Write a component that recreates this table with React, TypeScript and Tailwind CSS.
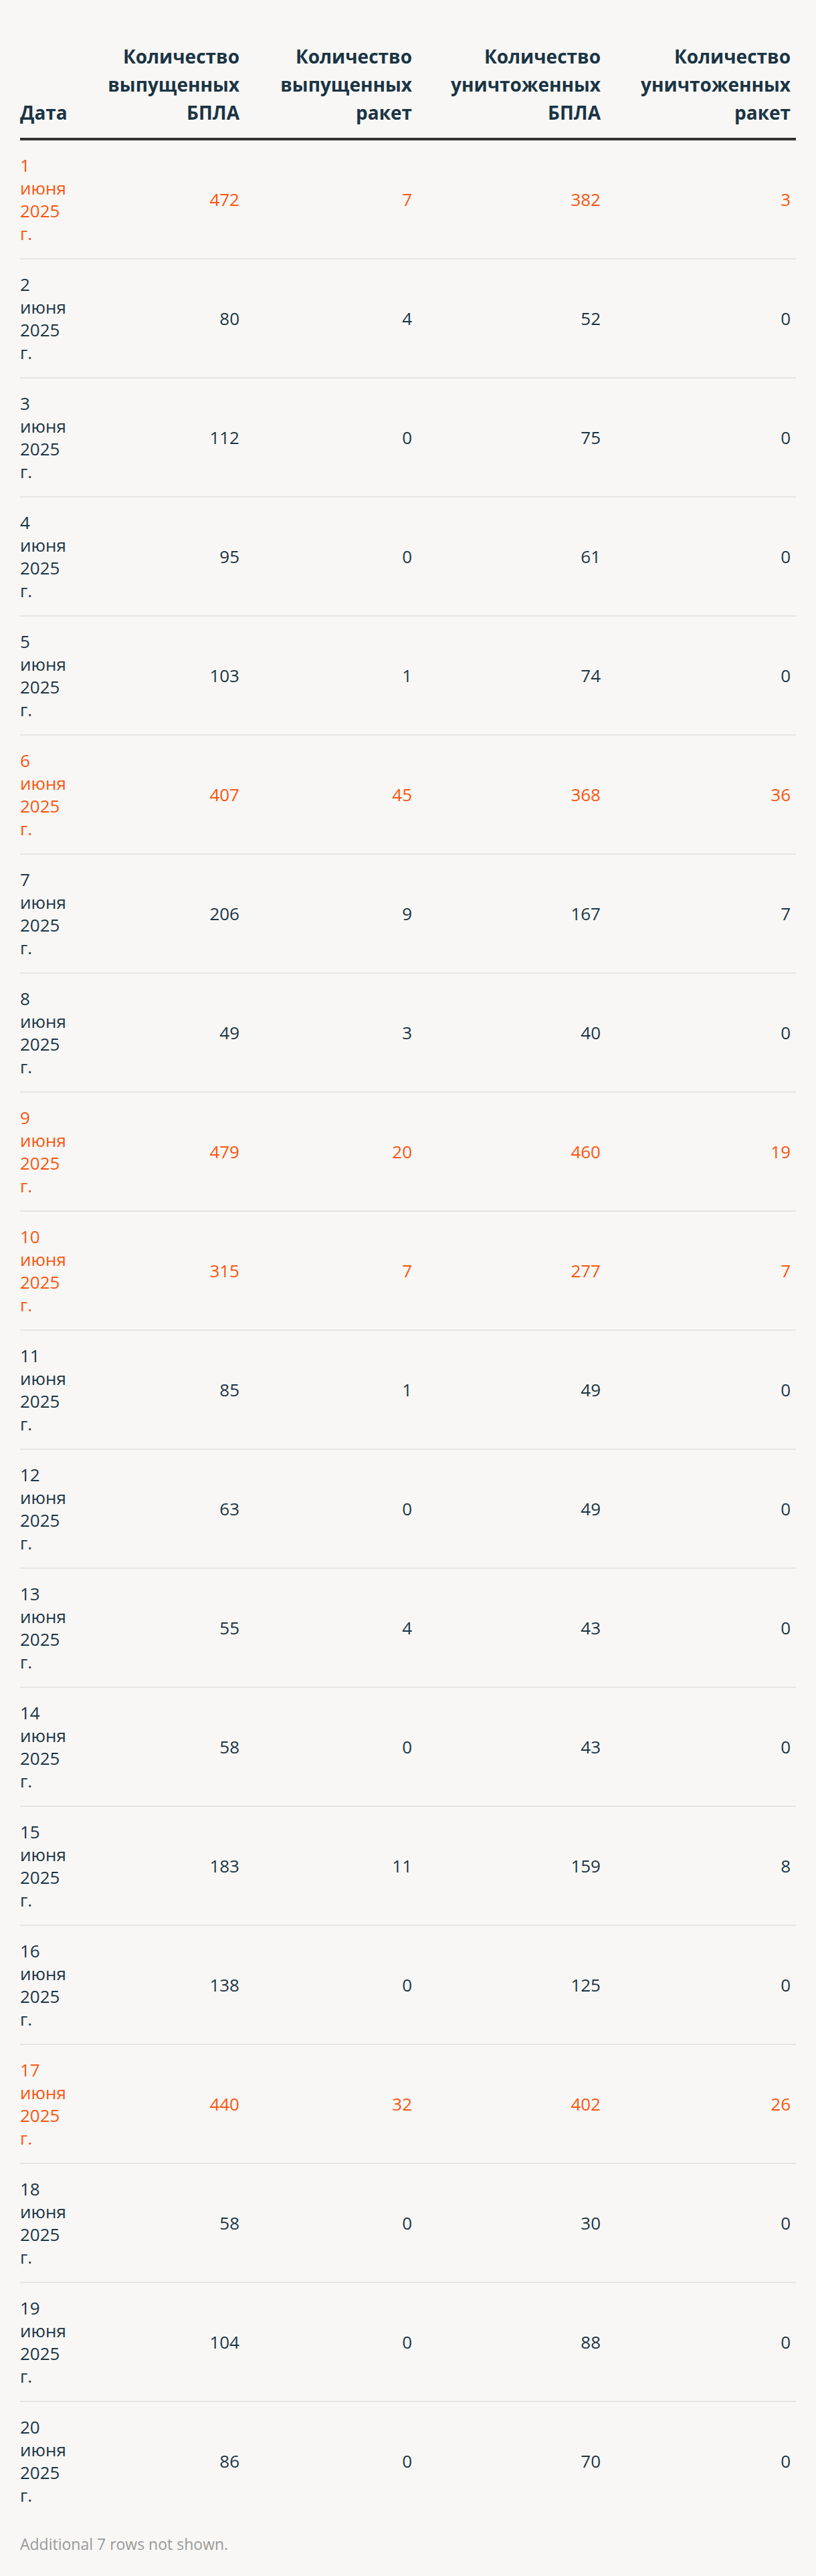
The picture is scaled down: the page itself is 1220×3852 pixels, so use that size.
import React from "react";

type Row = { d: number; a: number; b: number; c: number; e: number; hl?: boolean };

const rows: Row[] = [
  { d: 1, a: 472, b: 7, c: 382, e: 3, hl: true },
  { d: 2, a: 80, b: 4, c: 52, e: 0 },
  { d: 3, a: 112, b: 0, c: 75, e: 0 },
  { d: 4, a: 95, b: 0, c: 61, e: 0 },
  { d: 5, a: 103, b: 1, c: 74, e: 0 },
  { d: 6, a: 407, b: 45, c: 368, e: 36, hl: true },
  { d: 7, a: 206, b: 9, c: 167, e: 7 },
  { d: 8, a: 49, b: 3, c: 40, e: 0 },
  { d: 9, a: 479, b: 20, c: 460, e: 19, hl: true },
  { d: 10, a: 315, b: 7, c: 277, e: 7, hl: true },
  { d: 11, a: 85, b: 1, c: 49, e: 0 },
  { d: 12, a: 63, b: 0, c: 49, e: 0 },
  { d: 13, a: 55, b: 4, c: 43, e: 0 },
  { d: 14, a: 58, b: 0, c: 43, e: 0 },
  { d: 15, a: 183, b: 11, c: 159, e: 8 },
  { d: 16, a: 138, b: 0, c: 125, e: 0 },
  { d: 17, a: 440, b: 32, c: 402, e: 26, hl: true },
  { d: 18, a: 58, b: 0, c: 30, e: 0 },
  { d: 19, a: 104, b: 0, c: 88, e: 0 },
  { d: 20, a: 86, b: 0, c: 70, e: 0 },
];

const cols = "grid grid-cols-[80px_256px_258px_282px_284px]";

export default function App() {
  return (
    <div
      className="min-h-[3852px] bg-[#f8f7f5] px-[30px] pt-[47px]"
      style={{ fontFamily: '"Open Sans", "Noto Sans", sans-serif' }}
    >
      <div className="w-[1160px]">
        <div className={`${cols} border-b-4 border-[#333333] text-[28px] font-bold leading-[42px] text-[#1a3444]`}>
          <div className="flex items-end pb-[17px] pt-4 pr-2">Дата</div>
          <div className="flex items-end justify-end pb-[17px] pt-4 pr-2 text-right">
            Количество выпущенных БПЛА
          </div>
          <div className="flex items-end justify-end pb-[17px] pt-4 pr-2 text-right">
            Количество выпущенных ракет
          </div>
          <div className="flex items-end justify-end pb-[17px] pt-4 pr-2 text-right">
            Количество уничтоженных БПЛА
          </div>
          <div className="flex items-end justify-end pb-[17px] pt-4 pr-2 text-right">
            Количество уничтоженных ракет
          </div>
        </div>
        {rows.map((r, i) => (
          <div
            key={r.d}
            className={`${cols} text-[26px] leading-[34px] ${
              r.hl ? "text-[#fa5610]" : "text-[#1b3545]"
            } ${i < rows.length - 1 ? "border-b-2 border-[#e6e5e3]" : ""}`}
          >
            <div className="py-5 pr-2">
              <span className="block w-min">{r.d} июня 2025 г.</span>
            </div>
            <div className="flex items-center justify-end py-5 pr-2">{r.a}</div>
            <div className="flex items-center justify-end py-5 pr-2">{r.b}</div>
            <div className="flex items-center justify-end py-5 pr-2">{r.c}</div>
            <div className="flex items-center justify-end py-5 pr-2">{r.e}</div>
          </div>
        ))}
        <p className="pt-[19px] text-[23px] leading-[34px] text-[#999999]">
          Additional 7 rows not shown.
        </p>
      </div>
    </div>
  );
}
